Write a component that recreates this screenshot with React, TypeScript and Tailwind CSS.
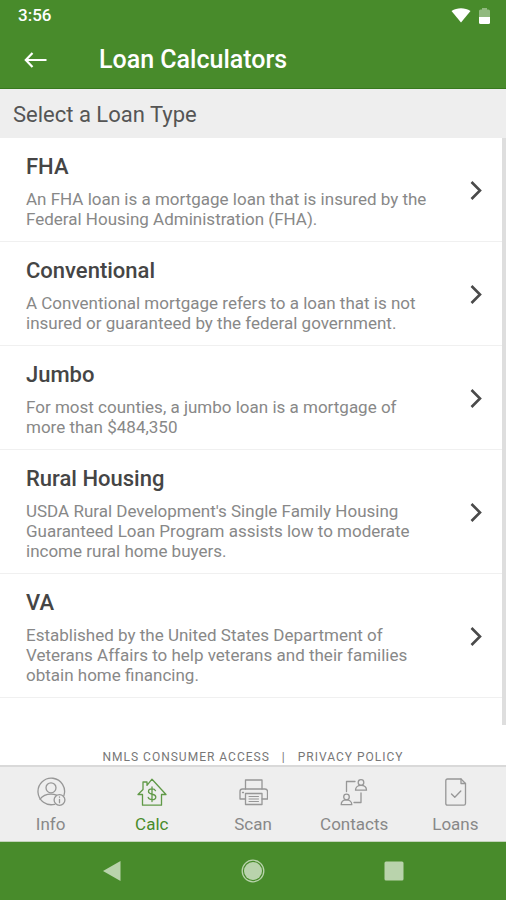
import type { ReactNode } from 'react';

interface LoanType {
  name: string;
  description: string;
}

const LOAN_TYPES: LoanType[] = [
  {
    name: 'FHA',
    description:
      'An FHA loan is a mortgage loan that is insured by the Federal Housing Administration (FHA).',
  },
  {
    name: 'Conventional',
    description:
      'A Conventional mortgage refers to a loan that is not insured or guaranteed by the federal government.',
  },
  {
    name: 'Jumbo',
    description: 'For most counties, a jumbo loan is a mortgage of more than $484,350',
  },
  {
    name: 'Rural Housing',
    description:
      "USDA Rural Development's Single Family Housing Guaranteed Loan Program assists low to moderate income rural home buyers.",
  },
  {
    name: 'VA',
    description:
      'Established by the United States Department of Veterans Affairs to help veterans and their families obtain home financing.',
  },
];

function TabIcon({ children }: { children: ReactNode }) {
  return (
    <svg
      viewBox="0 0 30 30"
      width={30}
      height={30}
      fill="none"
      stroke="currentColor"
      strokeWidth={1.3}
      strokeLinejoin="round"
      strokeLinecap="round"
      className="opacity-85"
      aria-hidden="true"
    >
      {children}
    </svg>
  );
}

const InfoIcon = () => (
  <TabIcon>
    <path d="M18.6 27.3A13.3 13.3 0 1 1 27.9 18.6" />
    <circle cx={15} cy={10.8} r={5} />
    <path d="M4 22.2c2.5-3.4 6.5-5 11-5 2 0 3.8.3 5.4 1" />
    <circle cx={23.5} cy={23} r={5.4} />
    <path d="M23.5 22.3v3.4M23.5 20v.2" />
  </TabIcon>
);

const CalcIcon = () => (
  <TabIcon>
    <path d="M5.5 28.2V17.5H1L6 12.5V5h4v3.4L15 2.2l14 15.3h-4.5v10.7z" />
    <path d="M18.5 13.7c-.5-1.2-1.8-1.8-3.5-1.8-2 0-3.5.9-3.5 2.6 0 3.9 7.3 1.6 7.3 5.4 0 1.7-1.6 2.7-3.7 2.7s-3.5-.8-3.9-2.2M15 10v14.5" />
  </TabIcon>
);

const ScanIcon = () => (
  <TabIcon>
    <path d="M7.5 12V3H24v9" />
    <path d="M7.5 22H2v-7.5Q2 12 4.500 12H27q2.500 0 2.500 2.500V22H24" />
    <path d="M7.5 16.5H24v11H7.5z" />
    <path d="M11 19.5h9.500M11 22h9.500M11 24.500h9.500" strokeWidth={1} />
    <path d="M4.5 15.500h1" />
  </TabIcon>
);

const ContactsIcon = () => (
  <TabIcon>
    <circle cx={22} cy={5.5} r={2.8} />
    <path d="M16.500 13.2c0-3 2.300-4.900 5.500-4.900s5.500 1.900 5.500 4.900z" />
    <circle cx={7.5} cy={20} r={2.8} />
    <path d="M2.200 27.700c0-3 2.200-4.900 5.300-4.900s5.300 1.900 5.300 4.900z" />
    <path d="M7.5 14.5v-10H16M22 16v9.5h-7" />
  </TabIcon>
);

const LoansIcon = () => (
  <TabIcon>
    <path d="M7.5 2H21l4.500 4.500v20q0 1.700-1.700 1.700H7.500q-1.700 0-1.700-1.700V3.700Q5.800 2 7.500 2z" />
    <path d="M21 2v4.500h4.500" />
    <path d="M11.500 17l3.300 3.300 6-6.300" />
  </TabIcon>
);

const TABS = [
  { label: 'Info', Icon: InfoIcon },
  { label: 'Calc', Icon: CalcIcon },
  { label: 'Scan', Icon: ScanIcon },
  { label: 'Contacts', Icon: ContactsIcon },
  { label: 'Loans', Icon: LoansIcon },
];

const ACTIVE_TAB = 'Calc';

function StatusBar() {
  return (
    <div className="flex h-8 items-center justify-between pl-[18px] pr-4">
      <span className="text-[17px] font-medium">3:56</span>
      <div className="flex items-center gap-2">
        <svg viewBox="0 0 20 16" width={20} height={16} fill="currentColor" aria-hidden="true">
          <path d="M.5 3C6-.6 14-.6 19.500 3L10 14.500z" />
        </svg>
        <svg viewBox="0 0 11 17" width={11} height={17} fill="currentColor" aria-hidden="true">
          <path d="M0 9V3Q0 1.500 1.500 1.500H3V0h5v1.500h1.500Q11 1.500 11 3v6z" opacity={0.4} />
          <path d="M0 9h11v5.500q0 1.500-1.500 1.500h-8Q0 16 0 14.500z" />
        </svg>
      </div>
    </div>
  );
}

function LoanRow({ name, description }: LoanType) {
  return (
    <li>
      <button
        type="button"
        className="flex w-full items-center justify-between border-b border-[#f0f0f0] pb-3 pl-[26px] pr-6 pt-[15px] text-left"
      >
        <span className="block max-w-[408px]">
          <span className="block text-[22px] font-medium leading-7 text-[#454545]">{name}</span>
          <span className="mt-2 block text-[17px] leading-5 text-[#888888]">{description}</span>
        </span>
        <svg
          viewBox="0 0 12 20"
          width={12}
          height={20}
          fill="none"
          stroke="#4a4a4a"
          strokeWidth={2.6}
          className="shrink-0"
          aria-hidden="true"
        >
          <path d="M1.500 1L10 9.500 1.500 18" />
        </svg>
      </button>
    </li>
  );
}

export default function App() {
  return (
    <div className="flex min-h-screen flex-col bg-white font-[Roboto,sans-serif]">
      <header className="border-b border-[#37791d] bg-[#488b2b] text-white">
        <StatusBar />
        <div className="flex h-14 items-center gap-[52px] pl-6">
          <button type="button" aria-label="Back">
            <svg
              viewBox="0 0 23 16"
              width={23}
              height={16}
              fill="none"
              stroke="currentColor"
              strokeWidth={2.2}
              aria-hidden="true"
            >
              <path d="M8.500 1L1.800 8l6.700 7M1.800 8H22.500" />
            </svg>
          </button>
          <h1 className="text-[25px] font-medium leading-8">Loan Calculators</h1>
        </div>
      </header>

      <h2 className="bg-[#eeeeee] px-[13px] pb-[9px] pt-3 text-[22px] leading-7 text-[#555555]">
        Select a Loan Type
      </h2>

      <main className="relative flex-1">
        <ul>
          {LOAN_TYPES.map((loan) => (
            <LoanRow key={loan.name} {...loan} />
          ))}
        </ul>
        {/* scroll indicator */}
        <div className="absolute bottom-6 right-0 top-0 w-1 bg-[#dedede]" />
      </main>

      <div className="flex items-center justify-center gap-3 text-xs leading-4 tracking-[1px] text-[#777777]">
        <a href="#nmls">NMLS CONSUMER ACCESS</a>
        <span>|</span>
        <a href="#privacy">PRIVACY POLICY</a>
      </div>

      <nav className="grid h-[77px] grid-cols-5 border-b border-t-2 border-b-[#c3d3ba] border-t-[#d9d9d9] bg-[#eeeeee]">
        {TABS.map(({ label, Icon }) => (
          <button
            key={label}
            type="button"
            className={`flex flex-col items-center gap-[7px] pt-2.5 ${
              label === ACTIVE_TAB ? 'text-[#488b2b]' : 'text-[#888888]'
            }`}
          >
            <Icon />
            <span className="text-[17px] leading-5">{label}</span>
          </button>
        ))}
      </nav>

      <div className="flex h-[58px] items-center justify-around bg-[#488b2b] px-[42px] text-[#b9d3ac]">
        <button type="button" aria-label="System back">
          <svg viewBox="0 0 24 24" width={24} height={24} fill="currentColor" aria-hidden="true">
            <path d="M3 12L20.500 2v20z" />
          </svg>
        </button>
        <button type="button" aria-label="Home">
          <svg viewBox="0 0 24 24" width={24} height={24} aria-hidden="true">
            <circle cx={12} cy={12} r={10.8} fill="none" stroke="currentColor" strokeWidth={1.3} />
            <circle cx={12} cy={12} r={9} fill="currentColor" />
          </svg>
        </button>
        <button type="button" aria-label="Recent apps">
          <svg viewBox="0 0 24 24" width={24} height={24} fill="currentColor" aria-hidden="true">
            <rect x={2.5} y={2.5} width={19} height={19} rx={1.5} />
          </svg>
        </button>
      </div>
    </div>
  );
}
